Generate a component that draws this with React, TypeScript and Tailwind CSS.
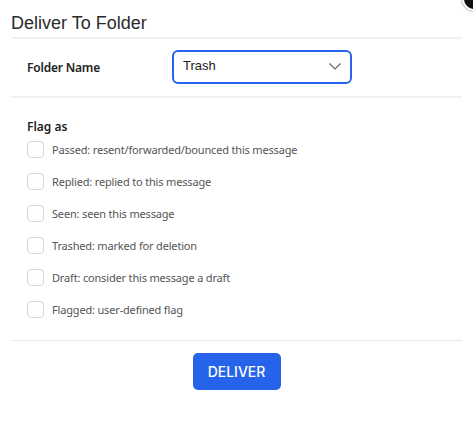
const flags = [
    "Passed: resent/forwarded/bounced this message",
    "Replied: replied to this message",
    "Seen: seen this message",
    "Trashed: marked for deletion",
    "Draft: consider this message a draft",
    "Flagged: user-defined flag",
];

export default function App() {
    return (
        <div className="relative w-[473px] h-[427px] overflow-hidden bg-white font-['Noto_Sans',sans-serif]">
            {/* close button peeking from the corner */}
            <div className="absolute left-[462px] top-[-13px] w-[24px] h-[24px] rounded-full bg-[#111] border-2 border-white shadow-[0_0_2px_rgba(0,0,0,0.6)]" />

            <div className="px-[11px] pt-[12px]">
                <h1 className="text-[18px] leading-[22px] text-[#2b2b2b] font-['Liberation_Sans',Arial,sans-serif]">
                    Deliver To Folder
                </h1>
                <div className="mt-[3px] h-[2px] bg-[#f0f0f5]" />

                <div className="flex items-center h-[57px] pl-[16px]">
                    <label className="w-[145px] text-[12px] tracking-[-0.2px] font-semibold text-[#222]">
                        Folder Name
                    </label>
                    <div className="flex items-center justify-between w-[180px] h-[34px] mt-[-2px] pl-[9px] pr-[9px] border-2 border-[#2563eb] rounded-[6px]">
                        <span className="text-[13px] text-[#222] font-['Liberation_Sans',Arial,sans-serif] mt-[-2px]">
                            Trash
                        </span>
                        <svg width="12" height="7" viewBox="0 0 12 7" fill="none">
                            <path d="M0.5 0.5 L6 6 L11.5 0.5" stroke="#666" strokeWidth="1.2" />
                        </svg>
                    </div>
                </div>
                <div className="h-[2px] bg-[#f0f0f5]" />

                <div className="pl-[16px] pt-[21px]">
                    <div className="text-[12px] leading-[16px] font-semibold text-[#222]">Flag as</div>
                    <div className="flex flex-col gap-[15px] mt-[6px]">
                        {flags.map((f) => (
                            <label key={f} className="flex items-center gap-[8px]">
                                <span className="w-[17px] h-[17px] rounded-[4px] border border-[#d4d4dc] bg-white" />
                                <span className="text-[11px] leading-[17px] tracking-[-0.17px] text-[#555]">{f}</span>
                            </label>
                        ))}
                    </div>
                </div>

                <div className="mt-[22px] h-[1px] bg-[#e6e6e6]" />

                <div className="flex justify-center pt-[12px]">
                    <button className="w-[88px] h-[37px] rounded-[5px] bg-[#2563eb] text-white text-[14px] font-medium font-['Inter',sans-serif]">
                        DELIVER
                    </button>
                </div>
            </div>
        </div>
    );
}
